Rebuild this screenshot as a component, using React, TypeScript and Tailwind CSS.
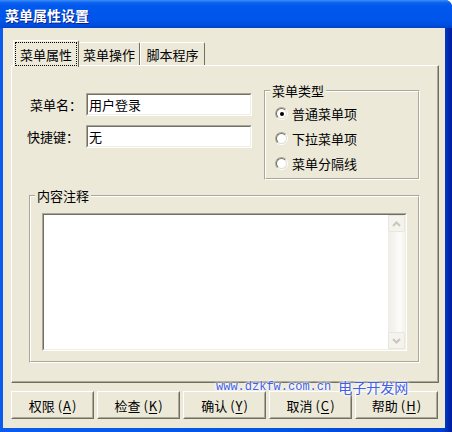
import React from 'react';

const FONT = "font-['Noto_Sans_CJK_SC','Noto_Sans_CJK_JP',sans-serif]";

function TextBox({ value }: { value: string }) {
  return (
    <div className="w-[166px] h-[23px] border border-t-[#ACA899] border-l-[#ACA899] border-r-white border-b-white">
      <div className="w-full h-full border border-t-[#716F64] border-l-[#716F64] border-r-[#F1EFE2] border-b-[#F1EFE2] bg-white flex items-center pl-[1px] text-[13px] leading-[13px] text-black">
        {value}
      </div>
    </div>
  );
}

function GroupBox({ title, className, children }: { title: string; className: string; children: React.ReactNode }) {
  return (
    <div className={`relative border border-t-[#ACA899] border-l-[#ACA899] border-r-white border-b-white ${className}`}>
      <div className="w-full h-full border border-t-white border-l-white border-r-[#ACA899] border-b-[#ACA899]">
        {children}
      </div>
      {/* legend sits over the etched line */}
      <span className="absolute left-[5px] top-[-7px] px-[2px] bg-[#ECE9D8] text-[13px] leading-[13px] text-black">
        {title}
      </span>
    </div>
  );
}

function Radio({ label, checked }: { label: string; checked?: boolean }) {
  return (
    <div className="flex items-center h-[13px]">
      <div className="w-[13px] h-[13px] rounded-full border border-t-[#ACA899] border-l-[#ACA899] border-r-white border-b-white">
        <div className="w-full h-full rounded-full border border-t-[#716F64] border-l-[#716F64] border-r-[#E2DFD2] border-b-[#E2DFD2] bg-white flex items-center justify-center">
          {checked && <div className="w-[4px] h-[4px] rounded-full bg-black" />}
        </div>
      </div>
      <span className="ml-[4px] text-[13px] leading-[13px] text-black">{label}</span>
    </div>
  );
}

function Button({ label, hotkey }: { label: string; hotkey: string }) {
  return (
    <div className="w-[83px] h-[28px] border border-t-white border-l-white border-r-[#716F64] border-b-[#716F64]">
      <div className="w-full h-full border border-t-[#ECE9D8] border-l-[#ECE9D8] border-r-[#ACA899] border-b-[#ACA899] bg-[#ECE9D8] flex items-center justify-center text-[13px] leading-[13px] text-black">
        {label}
        <span className="ml-[3px]">(</span>
        <span className="mx-[1px] underline underline-offset-2">{hotkey}</span>
        <span>)</span>
      </div>
    </div>
  );
}

export default function App() {
  return (
    <div className={`${FONT} relative w-[452px] h-[432px] flex flex-col bg-[linear-gradient(to_right,#0A5BEE_0%,#0055E5_60%,#0040D0_98%,#001C9A_100%)] rounded-tr-[7px] overflow-hidden select-none`}>
      {/* Title bar */}
      <div className="h-[28px] shrink-0 flex items-center pl-[5px] pt-[1px] bg-[linear-gradient(to_bottom,#3D8EF9_0%,#0B62EF_10%,#0058EE_22%,#0055EA_70%,#004FE0_88%,#0041CB_100%)]">
        <span className="text-white font-bold text-[14px] leading-[14px] [text-shadow:1px_1px_0_#0A1E8C]">
          菜单属性设置
        </span>
      </div>

      {/* Client area */}
      <div className="flex-1 ml-[3px] mr-[7px] mb-[4px] bg-[#ECE9D8] flex flex-col pl-[8px] pt-[12px]">
        {/* Tabs */}
        <div className="flex items-end h-[25px] ml-[2px]">
          <div className="relative z-10 w-[66px] h-[27px] mb-[-2px] bg-[#ECE9D8] border-t border-l border-white border-r border-r-[#716F64] rounded-t-[2px] flex items-center justify-center p-[1px]">
            <div className="w-full h-full border border-dotted border-black flex items-center justify-center text-[13px] leading-[13px] text-black">
              菜单属性
            </div>
          </div>
          <div className="w-[61px] h-[23px] bg-[#ECE9D8] border-t border-white border-r border-r-[#716F64] rounded-t-[2px] flex items-center justify-center text-[13px] leading-[13px] text-black">
            菜单操作
          </div>
          <div className="w-[65px] h-[23px] bg-[#ECE9D8] border-t border-l border-white border-r border-r-[#716F64] rounded-t-[2px] flex items-center justify-center text-[13px] leading-[13px] text-black">
            脚本程序
          </div>
        </div>

        {/* Tab panel */}
        <div className="w-[428px] h-[318px] border border-t-white border-l-white border-r-[#716F64] border-b-[#716F64]">
          <div className="w-full h-full border-r border-b border-r-[#ACA899] border-b-[#ACA899] flex flex-col pl-[14px] pt-[24px]">
            <div className="flex h-[90px]">
              <div className="w-[238px] flex flex-col pt-[3px] gap-[9px]">
                <div className="flex items-center">
                  <span className="w-[60px] pl-[4px] text-[13px] leading-[13px] text-black">菜单名：</span>
                  <TextBox value="用户登录" />
                </div>
                <div className="flex items-center">
                  <span className="w-[60px] pl-[1px] text-[13px] leading-[13px] text-black">快捷键：</span>
                  <TextBox value="无" />
                </div>
              </div>
              <GroupBox title="菜单类型" className="w-[156px] h-[90px]">
                <div className="flex flex-col pl-[9px] pt-[15px] gap-[12px]">
                  <Radio label="普通菜单项" checked />
                  <Radio label="下拉菜单项" />
                  <Radio label="菜单分隔线" />
                </div>
              </GroupBox>
            </div>

            <GroupBox title="内容注释" className="ml-[3px] mt-[15px] w-[391px] h-[168px]">
              <div className="pl-[11px] pt-[16px]">
                <div className="w-[365px] h-[138px] border border-t-[#ACA899] border-l-[#ACA899] border-r-white border-b-white">
                  <div className="w-full h-full border border-t-[#716F64] border-l-[#716F64] border-r-[#F1EFE2] border-b-[#F1EFE2] bg-white flex justify-end">
                    {/* disabled scrollbar */}
                    <div className="w-[17px] h-full flex flex-col justify-between bg-[linear-gradient(to_right,#EEEDE5,#FCFCFA_70%,#F3F2EC)]">
                      <div className="w-[17px] h-[17px] rounded-[2px] border border-[#E8E6DD] bg-[#F4F3EE] flex items-center justify-center">
                        <svg width="9" height="6" viewBox="0 0 9 6">
                          <polyline points="1,5 4.5,1.5 8,5" fill="none" stroke="#C9C7BA" strokeWidth="2" />
                        </svg>
                      </div>
                      <div className="w-[17px] h-[17px] rounded-[2px] border border-[#E8E6DD] bg-[#F4F3EE] flex items-center justify-center">
                        <svg width="9" height="6" viewBox="0 0 9 6">
                          <polyline points="1,1 4.5,4.5 8,1" fill="none" stroke="#C9C7BA" strokeWidth="2" />
                        </svg>
                      </div>
                    </div>
                  </div>
                </div>
              </div>
            </GroupBox>
          </div>
        </div>

        {/* Buttons */}
        <div className="flex gap-[3px] mt-[8px]">
          <Button label="权限" hotkey="A" />
          <Button label="检查" hotkey="K" />
          <Button label="确认" hotkey="Y" />
          <Button label="取消" hotkey="C" />
          <Button label="帮助" hotkey="H" />
        </div>
      </div>

      {/* watermark over the buttons */}
      <div className="absolute left-[216px] top-[379px] h-[16px] flex items-center text-[#3F5FE8] [text-shadow:0_0_2px_#fff,0_0_3px_#fff,0_0_5px_#fff]">
        <span className="font-['Liberation_Mono',monospace] text-[12px] leading-[16px]">www.dzkfw.com.cn</span>
        <span className="ml-[7px] text-[14px] leading-[16px]">电子开发网</span>
      </div>
    </div>
  );
}
